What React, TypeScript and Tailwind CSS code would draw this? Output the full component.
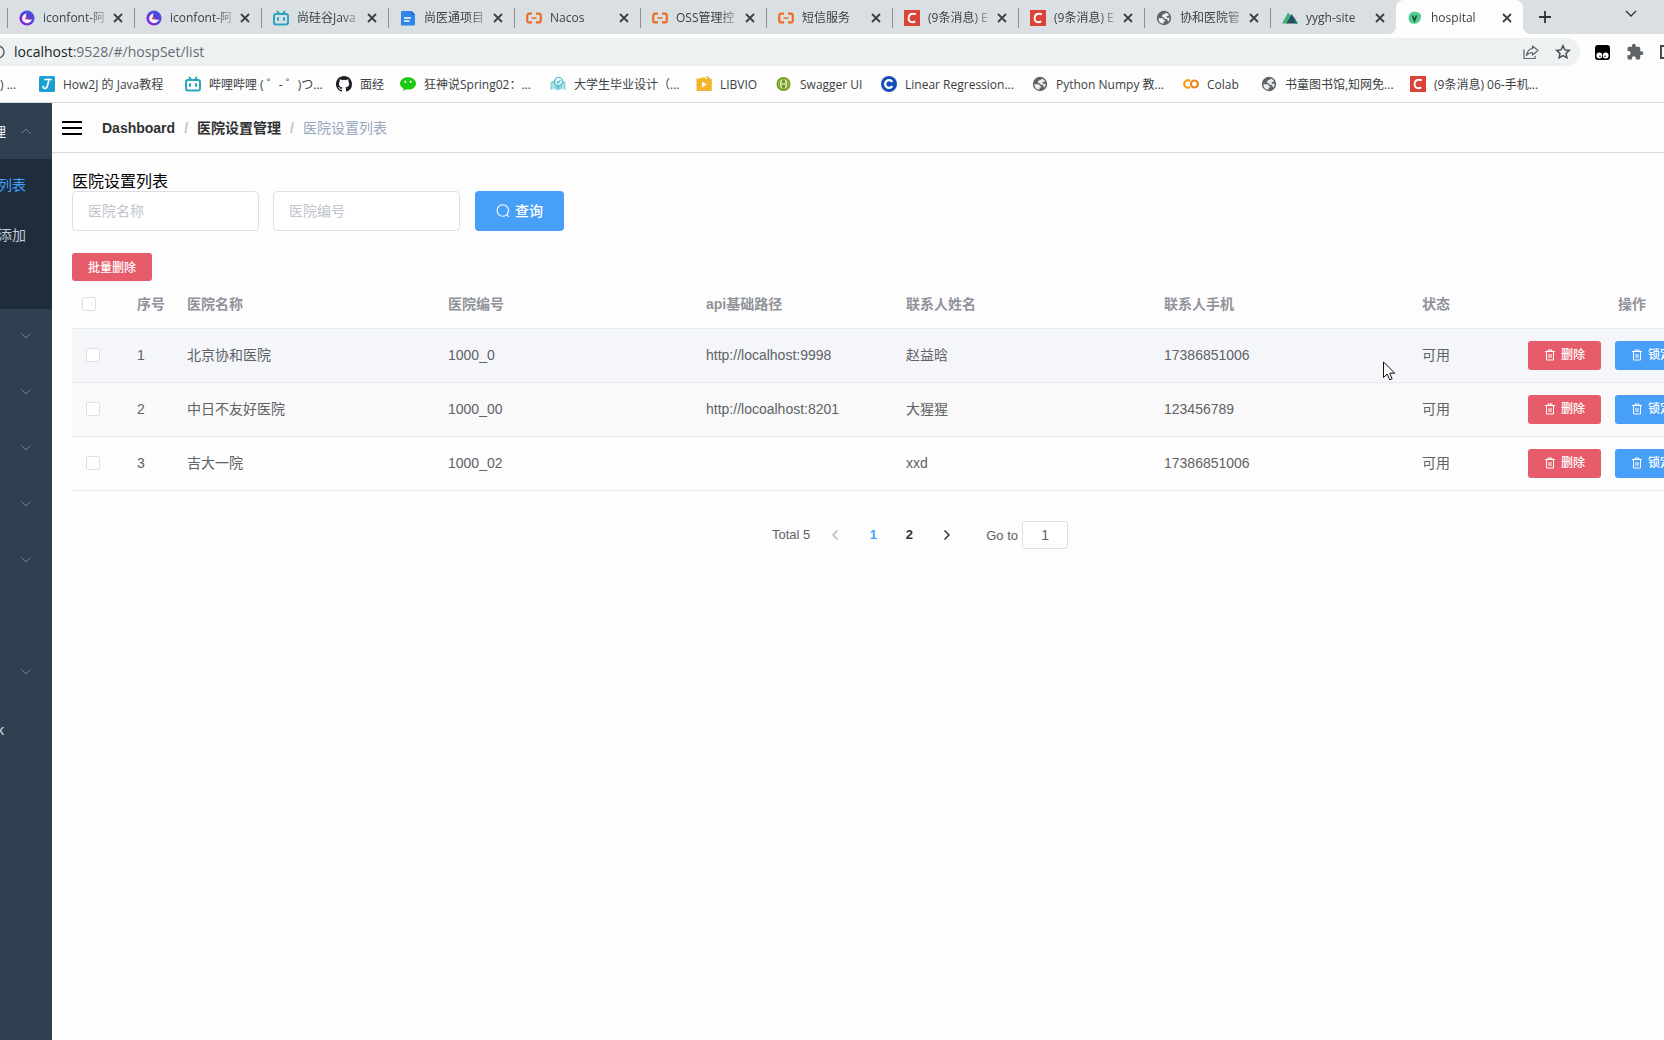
import React from 'react';

const browserFont = "font-['Open_Sans','Noto_Sans_CJK_SC',sans-serif]";
const pageFont = "font-['Liberation_Sans','Noto_Sans_CJK_SC',sans-serif]";

function IconfontLogo() {
  return (
    <svg viewBox="0 0 16 16" className="size-4 flex-none" aria-hidden="true">
      <defs>
        <linearGradient id="ifg" x1="1" y1="0" x2="0" y2="1">
          <stop offset="0" stopColor="#3a6be8" />
          <stop offset="0.5" stopColor="#5a3fd6" />
          <stop offset="1" stopColor="#a312d6" />
        </linearGradient>
      </defs>
      <circle cx="8" cy="8" r="7.6" fill="url(#ifg)" />
      <circle cx="8" cy="8.400" r="4.900" fill="#f6f0ff" />
      <path d="M8 2.800c3.400 0 6.200 2 6.200 4.600-.6 1.900-2.600 2.500-4.700 2.200C7.600 9.300 6.800 7.900 7 6.200 7.100 4.800 7.500 3.900 8 2.800Z" fill="#5044dc" />
      <circle cx="7.400" cy="8.300" r="1.300" fill="#e5484d" />
    </svg>
  );
}

function BiliLogo() {
  return (
    <svg viewBox="0 0 16 16" className="size-4 flex-none" fill="none" stroke="#2ba6bf" strokeWidth="2" strokeLinecap="round" aria-hidden="true">
      <rect x="1" y="4" width="14" height="10.500" rx="2" />
      <path d="M4.500 1.500 6 3.500M11.500 1.500 10 3.500M5 8v2M11 8v2" />
    </svg>
  );
}

function DocLogo() {
  return (
    <svg viewBox="0 0 16 16" className="size-4 flex-none" aria-hidden="true">
      <path d="M2 1h9.500L15 4.500V14a1.500 1.500 0 0 1-1.500 1.500H2A1 1 0 0 1 1 14V2a1 1 0 0 1 1-1Z" fill="#2f86ea" />
      <path d="M11.500 1 15 4.500h-3.500Z" fill="#1b5fb8" />
      <path d="M4 8h7M4 11h5.500" stroke="#fff" strokeWidth="1.300" />
    </svg>
  );
}

function AliLogo() {
  return (
    <svg viewBox="0 0 16 16" className="size-4 flex-none" fill="none" stroke="#ee6f22" strokeWidth="2.200" aria-hidden="true">
      <path d="M6 3.600H3.200A2 2 0 0 0 1.200 5.600v4.800a2 2 0 0 0 2 2H6M10 3.600h2.800a2 2 0 0 1 2 2v4.800a2 2 0 0 1-2 2H10" />
      <path d="M5.500 8h5" strokeWidth="1.600" />
    </svg>
  );
}

function CsdnLogo() {
  return (
    <svg viewBox="0 0 16 16" className="size-4 flex-none" aria-hidden="true">
      <rect width="16" height="16" fill="#da4335" />
      <path d="M11.800 4.600A4.200 4.200 0 0 0 9 3.700C6.400 3.700 4.700 5.600 4.600 8.200c-.1 2.400 1.300 4 3.700 4 1.100 0 2-.2 2.900-.8" fill="none" stroke="#fff" strokeWidth="1.900" />
    </svg>
  );
}

function GlobeLogo() {
  return (
    <svg viewBox="0 0 16 16" className="size-4 flex-none" aria-hidden="true">
      <circle cx="8" cy="8" r="7.200" fill="#5f6368" />
      <path d="M2.300 8.200h3.500c1.500 0 2.200.8 2.200 2h1.200v1.300H7.500v2.200a5.700 5.700 0 0 1-5.200-5.500Z" fill="#eceef0" />
      <path d="M9.500 2.500c1.500.4 2.700 1.300 3.500 2.600-.2.600-.8.900-1.500.9-.7 0-1 .5-1 1s.5.800 1.200.8h1.900c.1 1.400-.3 2.600-1.100 3.600-.8-.2-1-.8-1-1.400 0-.7-.5-1-1.200-1C8.800 9 8 8.200 8 7.300H6.200V5.500c0-.9.700-1.300 1.500-1.300.9 0 1.800-.6 1.800-1.700Z" fill="#eceef0" />
    </svg>
  );
}

function NuxtLogo() {
  return (
    <svg viewBox="0 0 16 16" className="size-4 flex-none" aria-hidden="true">
      <path d="M6 2.500 0 13.500h6l4-7Z" fill="#3fb37f" />
      <path d="M9.800 4 4.500 13.500H15.500Z" fill="#2f495e" />
      <path d="m12 7 3.800 6.500h-3Z" fill="#108775" />
    </svg>
  );
}

function HospitalLogo() {
  return (
    <svg viewBox="0 0 16 16" className="size-4 flex-none" aria-hidden="true">
      <path d="M5 2.200c3-1 5.800 0 7.500 1 1.800 1.300 2 3 1.200 5.200-.9 2.600-2.500 5-6 5.300-3.200.2-5.500-1.400-6-4.300C1.300 6.500 2 3.300 5 2.200Z" fill="#53cd8d" />
      <path d="M5.500 5.500 7.500 10.500 9.500 5.500" fill="none" stroke="#1f4a3a" strokeWidth="1.600" />
    </svg>
  );
}

function How2jLogo() {
  return (
    <svg viewBox="0 0 16 16" className="size-4 flex-none" aria-hidden="true">
      <rect width="16" height="16" rx="1.500" fill="#1c9fd2" />
      <path d="M6 3.500h6M10 3.500c-.8 3-1.200 9-4 9-1.500 0-2-1-1.600-2.200" fill="none" stroke="#fff" strokeWidth="1.700" strokeLinecap="round" />
    </svg>
  );
}

function GithubLogo() {
  return (
    <svg viewBox="0 0 16 16" className="size-4 flex-none" fill="#1b1f23" aria-hidden="true">
      <path d="M8 0C3.580 0 0 3.580 0 8c0 3.540 2.290 6.530 5.470 7.590.4.070.55-.17.55-.38 0-.19-.01-.82-.01-1.490-2.010.37-2.530-.49-2.690-.94-.09-.23-.48-.94-.82-1.130-.28-.15-.68-.52-.01-.53.63-.01 1.080.58 1.230.82.72 1.210 1.870.87 2.330.66.07-.52.28-.87.51-1.070-1.780-.2-3.640-.89-3.640-3.950 0-.87.31-1.590.82-2.150-.08-.2-.36-1.020.08-2.120 0 0 .67-.21 2.200.82a7.600 7.600 0 0 1 4 0c1.530-1.040 2.200-.82 2.200-.82.44 1.100.16 1.920.08 2.120.51.56.82 1.270.82 2.150 0 3.070-1.870 3.750-3.650 3.950.29.25.54.73.54 1.480 0 1.070-.01 1.930-.01 2.200 0 .21.15.46.55.38A8 8 0 0 0 16 8c0-4.420-3.580-8-8-8Z" />
    </svg>
  );
}

function WechatLogo() {
  return (
    <svg viewBox="0 0 16 16" className="size-4 flex-none" aria-hidden="true">
      <path d="M8 1.200c4.400 0 8 2.700 8 6.200s-3.600 6.200-8 6.200c-.8 0-1.500 0-2.200-.2L3 14.800l.5-2.400C1.400 11.300 0 9.500 0 7.400c0-3.500 3.600-6.200 8-6.200Z" fill="#1ec914" />
      <circle cx="5.300" cy="5.800" r="1.100" fill="#fff" />
      <circle cx="10.700" cy="5.800" r="1.100" fill="#fff" />
    </svg>
  );
}

function MapLogo() {
  return (
    <svg viewBox="0 0 16 16" className="size-4 flex-none" aria-hidden="true">
      <path d="M.5 6 4 4.500 8 7l4-2.500L15.500 6v8L12 12.500 8 14.500l-4-2L.5 14Z" fill="#8fd4dc" />
      <path d="M3 13V8M13 13V8" stroke="#d7f1f4" />
      <circle cx="8.500" cy="5.500" r="4" fill="#e9fafb" stroke="#4fb9c6" strokeWidth="1.200" />
      <path d="M6.800 5.500 8.200 7l2.200-3M8 9.500V13" fill="none" stroke="#4fb9c6" strokeWidth="1.200" />
    </svg>
  );
}

function LibvioLogo() {
  return (
    <svg viewBox="0 0 16 16" className="size-4 flex-none" aria-hidden="true">
      <path d="m10.500.6 3.500 2.700" stroke="#e0a81c" strokeWidth="1.500" />
      <path d="M1 2.500h3L5 1.500h4l1 1.500h5a.8.8 0 0 1 .8.800v10.200a1 1 0 0 1-1 1H1.500a1 1 0 0 1-1-1V3a.5.5 0 0 1 .5-.5Z" fill="#f1b52a" />
      <path d="M6 5.500V11.500l4.700-3Z" fill="#fff" />
    </svg>
  );
}

function SwaggerLogo() {
  return (
    <svg viewBox="0 0 16 16" className="size-4 flex-none" aria-hidden="true">
      <circle cx="7.500" cy="8" r="7" fill="#6f9a1d" />
      <circle cx="7.500" cy="8" r="5" fill="none" stroke="#b9d86d" strokeWidth=".8" />
      <path d="M6 4.500c-1.300 0-1 1.500-1 2.300S4.500 8 4 8c.5 0 1 .4 1 1.200s-.3 2.300 1 2.300M9 4.500c1.300 0 1 1.500 1 2.300s.5 1.200 1 1.200c-.5 0-1 .4-1 1.200s.3 2.300-1 2.300M5.500 8h4" fill="none" stroke="#fff" strokeWidth="1.200" />
    </svg>
  );
}

function CourseLogo() {
  return (
    <svg viewBox="0 0 16 16" className="size-4 flex-none" aria-hidden="true">
      <circle cx="8" cy="8" r="8" fill="#1450b4" />
      <path d="M11.300 5.900A3.900 3.900 0 1 0 11.300 10.100" fill="none" stroke="#fff" strokeWidth="2.300" />
      <circle cx="11.500" cy="8" r="1" fill="#1450b4" />
    </svg>
  );
}

function ColabLogo() {
  return (
    <svg viewBox="0 0 16 16" className="size-4 flex-none" fill="none" strokeWidth="2.200" aria-hidden="true">
      <path d="M7 5.100A3.600 3.600 0 1 0 7 10.900" stroke="#f0a11f" />
      <circle cx="11.400" cy="8" r="3.500" stroke="#e8871e" />
    </svg>
  );
}

const tabs = [
  { icon: <IconfontLogo />, title: 'iconfont-阿' },
  { icon: <IconfontLogo />, title: 'iconfont-阿' },
  { icon: <BiliLogo />, title: '尚硅谷Java' },
  { icon: <DocLogo />, title: '尚医通项目' },
  { icon: <AliLogo />, title: 'Nacos' },
  { icon: <AliLogo />, title: 'OSS管理控' },
  { icon: <AliLogo />, title: '短信服务' },
  { icon: <CsdnLogo />, title: '(9条消息) E' },
  { icon: <CsdnLogo />, title: '(9条消息) E' },
  { icon: <GlobeLogo />, title: '协和医院管' },
  { icon: <NuxtLogo />, title: 'yygh-site' },
  { icon: <HospitalLogo />, title: 'hospital' },
];

const bookmarks = [
  { icon: <How2jLogo />, title: 'How2J 的 Java教程', width: 'w-[146px]' },
  { icon: <BiliLogo />, title: '哔哩哔哩 ( ゜- ゜)つ...', width: 'w-[151px]' },
  { icon: <GithubLogo />, title: '面经', width: 'w-16' },
  { icon: <WechatLogo />, title: '狂神说Spring02：...', width: 'w-[150px]' },
  { icon: <MapLogo />, title: '大学生毕业设计（...', width: 'w-[146px]' },
  { icon: <LibvioLogo />, title: 'LIBVIO', width: 'w-20' },
  { icon: <SwaggerLogo />, title: 'Swagger UI', width: 'w-[105px]' },
  { icon: <CourseLogo />, title: 'Linear Regression...', width: 'w-[151px]' },
  { icon: <GlobeLogo />, title: 'Python Numpy 教...', width: 'w-[151px]' },
  { icon: <ColabLogo />, title: 'Colab', width: 'w-[78px]' },
  { icon: <GlobeLogo />, title: '书童图书馆,知网免...', width: 'w-[149px]' },
  { icon: <CsdnLogo />, title: '(9条消息) 06-手机...', width: 'w-[140px]' },
];

function CloseIcon() {
  return (
    <svg viewBox="0 0 12 12" className="size-3" stroke="#3c4043" strokeWidth="1.800" aria-hidden="true">
      <path d="m2 2 8 8M10 2l-8 8" />
    </svg>
  );
}

function TabStrip() {
  return (
    <div className="flex h-[34px] items-stretch overflow-hidden bg-[#dadfe3] pl-[7px]">
      <div className="grid flex-none grid-cols-[repeat(3,127px)_repeat(8,126px)_127px]">
        {tabs.map((tab, i) => {
          const active = i === tabs.length - 1;
          return (
            <div
              key={i}
              className={
                active
                  ? 'relative flex items-center rounded-t-lg bg-[#fdfdfd] pt-px pr-2.5 pl-[11px]'
                  : 'flex items-center pt-px pr-2.5'
              }
            >
              {!active && <span className="mr-[11px] h-5 w-px flex-none bg-[#8b9095]" />}
              {active && (
                <>
                  <span className="absolute bottom-0 -left-2 size-2 bg-[radial-gradient(circle_at_0_0,transparent_8px,#fdfdfd_8px)]" />
                  <span className="absolute -right-2 bottom-0 size-2 bg-[radial-gradient(circle_at_100%_0,transparent_8px,#fdfdfd_8px)]" />
                </>
              )}
              {tab.icon}
              <span className="ml-2 flex-1 mask-r-from-65% pt-px text-xs whitespace-nowrap text-[#3c4043]">
                {tab.title}
              </span>
              <button type="button" aria-label="Close tab" className="flex-none">
                <CloseIcon />
              </button>
            </div>
          );
        })}
      </div>
      <button type="button" aria-label="New tab" className="ml-4 flex-none">
        <svg viewBox="0 0 12 12" className="size-3" stroke="#303438" strokeWidth="1.800" aria-hidden="true">
          <path d="M6 0v12M0 6h12" />
        </svg>
      </button>
      <button type="button" aria-label="Search tabs" className="mr-[27px] mb-1.5 ml-auto flex-none">
        <svg viewBox="0 0 12 8" className="h-2 w-3" fill="none" stroke="#303438" strokeWidth="1.300" aria-hidden="true">
          <path d="m1 1 5 5 5-5" />
        </svg>
      </button>
    </div>
  );
}

function Toolbar() {
  return (
    <div className="flex h-8 items-end overflow-hidden">
      <div className="flex h-7 flex-1 items-center rounded-r-full bg-[#eef1f2] pr-[9px]">
        <svg viewBox="0 0 5 14" className="h-3.5 w-[5px] flex-none" fill="none" stroke="#5f6368" strokeWidth="1.500" aria-hidden="true">
          <circle cx="-2" cy="7" r="6" />
        </svg>
        <span className="ml-[9px] flex-1 text-sm text-[#686c70]">
          <span className="text-[#202124]">localhost</span>:9528/#/hospSet/list
        </span>
        <button type="button" aria-label="Share">
          <svg viewBox="0 0 16 16" className="size-4" fill="none" stroke="#5f6368" strokeWidth="1.200" aria-hidden="true">
            <path d="M1 5.500v9h11V12" />
            <path d="M9.500 2 15 6.500 9.500 11V8.500C6.500 8.500 5 9.500 3.500 11.500 4 8 6 5 9.500 4.500Z" strokeLinejoin="round" />
          </svg>
        </button>
        <button type="button" aria-label="Bookmark this page" className="ml-4">
          <svg viewBox="0 0 16 16" className="size-4" fill="none" stroke="#4a4e52" strokeWidth="1.500" aria-hidden="true">
            <path d="m8 1.800 1.900 4.100 4.400.5-3.300 3 .9 4.400L8 11.600l-3.900 2.200.9-4.400-3.300-3 4.400-.5Z" />
          </svg>
        </button>
      </div>
      <div className="flex h-7 flex-none items-center pl-[15px]">
        <button type="button" aria-label="Tampermonkey">
          <svg viewBox="0 0 15 15" className="size-[15px]" aria-hidden="true">
            <rect width="15" height="15" rx="3" fill="#000" />
            <circle cx="4.300" cy="10.500" r="2.900" fill="#fff" />
            <circle cx="10.700" cy="10.500" r="2.900" fill="#fff" />
            <circle cx="5" cy="11.200" r=".8" fill="#000" />
            <circle cx="10" cy="11.200" r=".8" fill="#000" />
          </svg>
        </button>
        <button type="button" aria-label="Extensions" className="ml-4">
          <svg viewBox="0 0 24 24" className="size-[18px]" fill="#5f6368" aria-hidden="true">
            <path d="M20.500 11H19V7a2 2 0 0 0-2-2h-4V3.500a2.500 2.500 0 0 0-5 0V5H4a2 2 0 0 0-2 2v3.800h1.500a2.700 2.700 0 0 1 0 5.400H2V20a2 2 0 0 0 2 2h3.800v-1.500a2.700 2.700 0 0 1 5.400 0V22H17a2 2 0 0 0 2-2v-4h1.500a2.500 2.500 0 0 0 0-5Z" />
          </svg>
        </button>
        <span className="ml-4 h-3.5 w-1 border-y-2 border-l-2 border-[#4a4e52]" />
      </div>
    </div>
  );
}

function Bookmarks() {
  return (
    <nav className="flex h-[37px] items-center overflow-hidden border-b border-[#d6d8da] text-xs whitespace-nowrap text-[#3c4043]">
      <a href="#b" className="w-[39px] flex-none pt-0.5">
        ) ...
      </a>
      {bookmarks.map((b, i) => (
        <a key={i} href="#b" className={`flex flex-none items-center gap-2 ${b.width}`}>
          {b.icon}
          <span className="pt-0.5 whitespace-pre">{b.title}</span>
        </a>
      ))}
    </nav>
  );
}

function Chevron({ up = false }: { up?: boolean }) {
  return (
    <svg viewBox="0 0 10 6" className="h-1.5 w-2.5 flex-none" fill="none" stroke="#75828f" aria-hidden="true">
      <path d={up ? 'm.5 5.500 4.500-4.500 4.500 4.500' : 'm.5.5 4.500 4.500 4.500-4.500'} />
    </svg>
  );
}

function Sidebar() {
  const groups = [true, true, true, true, true, false, true];
  return (
    <aside className="w-[52px] flex-none overflow-hidden bg-[#2f4051] text-sm whitespace-nowrap">
      <button type="button" className="flex h-14 w-full items-center justify-end gap-[15px] pr-[21px] text-[#f0f3f5]">
        <span className="pt-0.5">医院设置管理</span>
        <Chevron up />
      </button>
      <div className="h-[150px] bg-[#1f2d3a]">
        <a href="#/hospSet/list" className="flex h-[50px] items-center justify-end pt-0.5 pr-[26px] text-[#409eff]">
          医院设置列表
        </a>
        <a href="#/hospSet/add" className="flex h-[50px] items-center justify-end pt-0.5 pr-[26px] text-[#bfcbd9]">
          医院设置添加
        </a>
      </div>
      {groups.map((open, i) => (
        <button key={i} type="button" aria-label="Menu group" className="flex h-14 w-full items-center justify-end pr-[21px] pb-0.5">
          {open && <Chevron />}
        </button>
      ))}
      <a href="#link" className="flex h-14 items-center justify-end pt-0.5 pr-12 text-[#dfe5eb]">
        External Link
      </a>
    </aside>
  );
}

function TrashIcon() {
  return (
    <svg viewBox="0 0 12 12" className="size-3 flex-none" fill="none" stroke="currentColor" aria-hidden="true">
      <path d="M1 2.500h10M4 2.500V1h4v1.500M2.500 2.500v8.500h7V2.500M5 5v4M7 5v4" />
    </svg>
  );
}

const rows = [
  { id: 1, name: '北京协和医院', code: '1000_0', url: 'http://localhost:9998', contact: '赵益晗', phone: '17386851006', bg: 'bg-[#f4f6fa]' },
  { id: 2, name: '中日不友好医院', code: '1000_00', url: 'http://locoalhost:8201', contact: '大猩猩', phone: '123456789', bg: 'bg-[#f9f9f9]' },
  { id: 3, name: '吉大一院', code: '1000_02', url: '', contact: 'xxd', phone: '17386851006', bg: '' },
];

const box = 'block size-3.5 appearance-none rounded-xs border border-[#dcdfe6] bg-white';
const small = 'inline-flex items-center gap-[5px] rounded-[3px] px-4 text-xs font-medium text-white';

function HospitalTable() {
  return (
    <table className="w-full table-fixed text-left text-sm text-[#606266]">
      <colgroup>
        <col className="w-[55px]" />
        <col className="w-[50px]" />
        <col className="w-[261px]" />
        <col className="w-[258px]" />
        <col className="w-[200px]" />
        <col className="w-[258px]" />
        <col className="w-[258px]" />
        <col className="w-[106px]" />
        <col />
      </colgroup>
      <thead className="text-[#909399]">
        <tr className="h-[47px] border-b border-[#e6eaf1]">
          <th className="px-2.5">
            <input type="checkbox" aria-label="Select all" className={box} />
          </th>
          <th className="px-2.5 whitespace-nowrap">序号</th>
          <th className="px-2.5">医院名称</th>
          <th className="px-2.5">医院编号</th>
          <th className="px-2.5">api基础路径</th>
          <th className="px-2.5">联系人姓名</th>
          <th className="px-2.5">联系人手机</th>
          <th className="px-2.5">状态</th>
          <th className="px-2.5 text-center">操作</th>
        </tr>
      </thead>
      <tbody>
        {rows.map((r) => (
          <tr key={r.id} className={`h-[54px] border-b border-[#e6eaf1] ${r.bg}`}>
            <td className="px-3.5">
              <input type="checkbox" aria-label={r.name} className={box} />
            </td>
            <td className="px-2.5">{r.id}</td>
            <td className="px-2.5">{r.name}</td>
            <td className="px-2.5">{r.code}</td>
            <td className="px-2.5">{r.url}</td>
            <td className="px-2.5">{r.contact}</td>
            <td className="px-2.5">{r.phone}</td>
            <td className="px-2.5">可用</td>
            <td className="px-2.5">
              <div className="flex gap-3.5">
                <button type="button" className={`${small} h-[29px] bg-[#e75c6b]`}>
                  <TrashIcon />
                  删除
                </button>
                <button type="button" className={`${small} h-[29px] bg-[#489ff7]`}>
                  <TrashIcon />
                  锁定
                </button>
              </div>
            </td>
          </tr>
        ))}
      </tbody>
    </table>
  );
}

function Pager() {
  return (
    <nav aria-label="Pagination" className="mt-[30px] flex items-center justify-center pl-[22px] text-[13px] text-[#606266]">
      <span>Total 5</span>
      <button type="button" aria-label="Previous page" className="ml-[7px] flex w-9 justify-center">
        <svg viewBox="0 0 6 10" className="h-2.5 w-1.5" fill="none" stroke="#b4b9c2" strokeWidth="1.500" aria-hidden="true">
          <path d="M5.500.5 1 5l4.500 4.500" />
        </svg>
      </button>
      <button type="button" className="ml-0.5 w-9 font-bold text-[#409eff]">1</button>
      <button type="button" className="w-9 font-bold text-[#303133]">2</button>
      <button type="button" aria-label="Next page" className="ml-0.5 flex w-9 justify-center">
        <svg viewBox="0 0 6 10" className="h-2.5 w-1.5" fill="none" stroke="#303133" strokeWidth="1.500" aria-hidden="true">
          <path d="M.5.5 5 5 .5 9.500" />
        </svg>
      </button>
      <label className="ml-[21px] flex items-center gap-1">
        <span className="pt-0.5">Go to</span>
        <input defaultValue="1" className="h-7 w-[46px] rounded-[3px] border border-[#dcdfe6] bg-white text-center text-sm" />
      </label>
    </nav>
  );
}

export default function App() {
  return (
    <div className={`relative flex min-h-screen flex-col overflow-hidden bg-[#fdfdfd] ${pageFont}`}>
      <header className={browserFont}>
        <TabStrip />
        <Toolbar />
        <Bookmarks />
      </header>
      <div className="flex flex-1">
        <Sidebar />
        <main className="min-w-0 flex-1 overflow-hidden">
          <div className="flex h-[50px] items-center border-b border-[#d8dce5] pl-2.5 text-sm">
            <button type="button" aria-label="Toggle sidebar" className="flex w-5 flex-col gap-1">
              <span className="h-0.5 w-full bg-black" />
              <span className="h-0.5 w-full bg-black" />
              <span className="h-0.5 w-full bg-black" />
            </button>
            <nav aria-label="Breadcrumb" className="ml-5 flex items-center gap-[9px]">
              <a href="#/dashboard" className="font-bold text-[#303133]">Dashboard</a>
              <span className="font-bold text-[#c0c4cc]">/</span>
              <a href="#/hospSet" className="font-bold text-[#303133]">医院设置管理</a>
              <span className="font-bold text-[#c0c4cc]">/</span>
              <span className="text-[#97a8be]">医院设置列表</span>
            </nav>
          </div>
          <div className="p-5">
            <h1 className="text-base leading-[18px] text-black">医院设置列表</h1>
            <form className="flex" onSubmit={(e) => e.preventDefault()}>
              <input aria-label="医院名称" placeholder="医院名称" className="h-10 w-[187px] rounded border border-[#dcdfe6] bg-white px-[15px] text-sm placeholder:text-[#c0c4cc]" />
              <input aria-label="医院编号" placeholder="医院编号" className="ml-3.5 h-10 w-[187px] rounded border border-[#dcdfe6] bg-white px-[15px] text-sm placeholder:text-[#c0c4cc]" />
              <button type="submit" className="ml-[15px] flex h-10 w-[89px] items-center justify-center gap-[5px] rounded bg-[#489ff7] text-sm font-medium text-white">
                <svg viewBox="0 0 14 14" className="size-3.5" fill="none" stroke="currentColor" strokeWidth="1.100" aria-hidden="true">
                  <circle cx="6.800" cy="6.500" r="5.700" />
                  <path d="m10.800 10.500 2 2.500" />
                </svg>
                查询
              </button>
            </form>
            <button type="button" className="mt-[22px] flex h-7 w-20 items-center justify-center rounded-[3px] bg-[#e75c6b] pt-0.5 text-xs font-medium text-white">
              批量删除
            </button>
            <div className="min-w-[1674px]">
              <HospitalTable />
              <Pager />
            </div>
          </div>
        </main>
      </div>
      <svg viewBox="0 0 13 20" className="pointer-events-none absolute top-[361px] left-[1383px] h-5 w-[13px]" fill="#fff" stroke="#111" aria-hidden="true">
        <path d="M.5 1v15.500l3.700-3.400 2.500 5.700 2.400-1-2.400-5.600h5.100Z" />
      </svg>
    </div>
  );
}
